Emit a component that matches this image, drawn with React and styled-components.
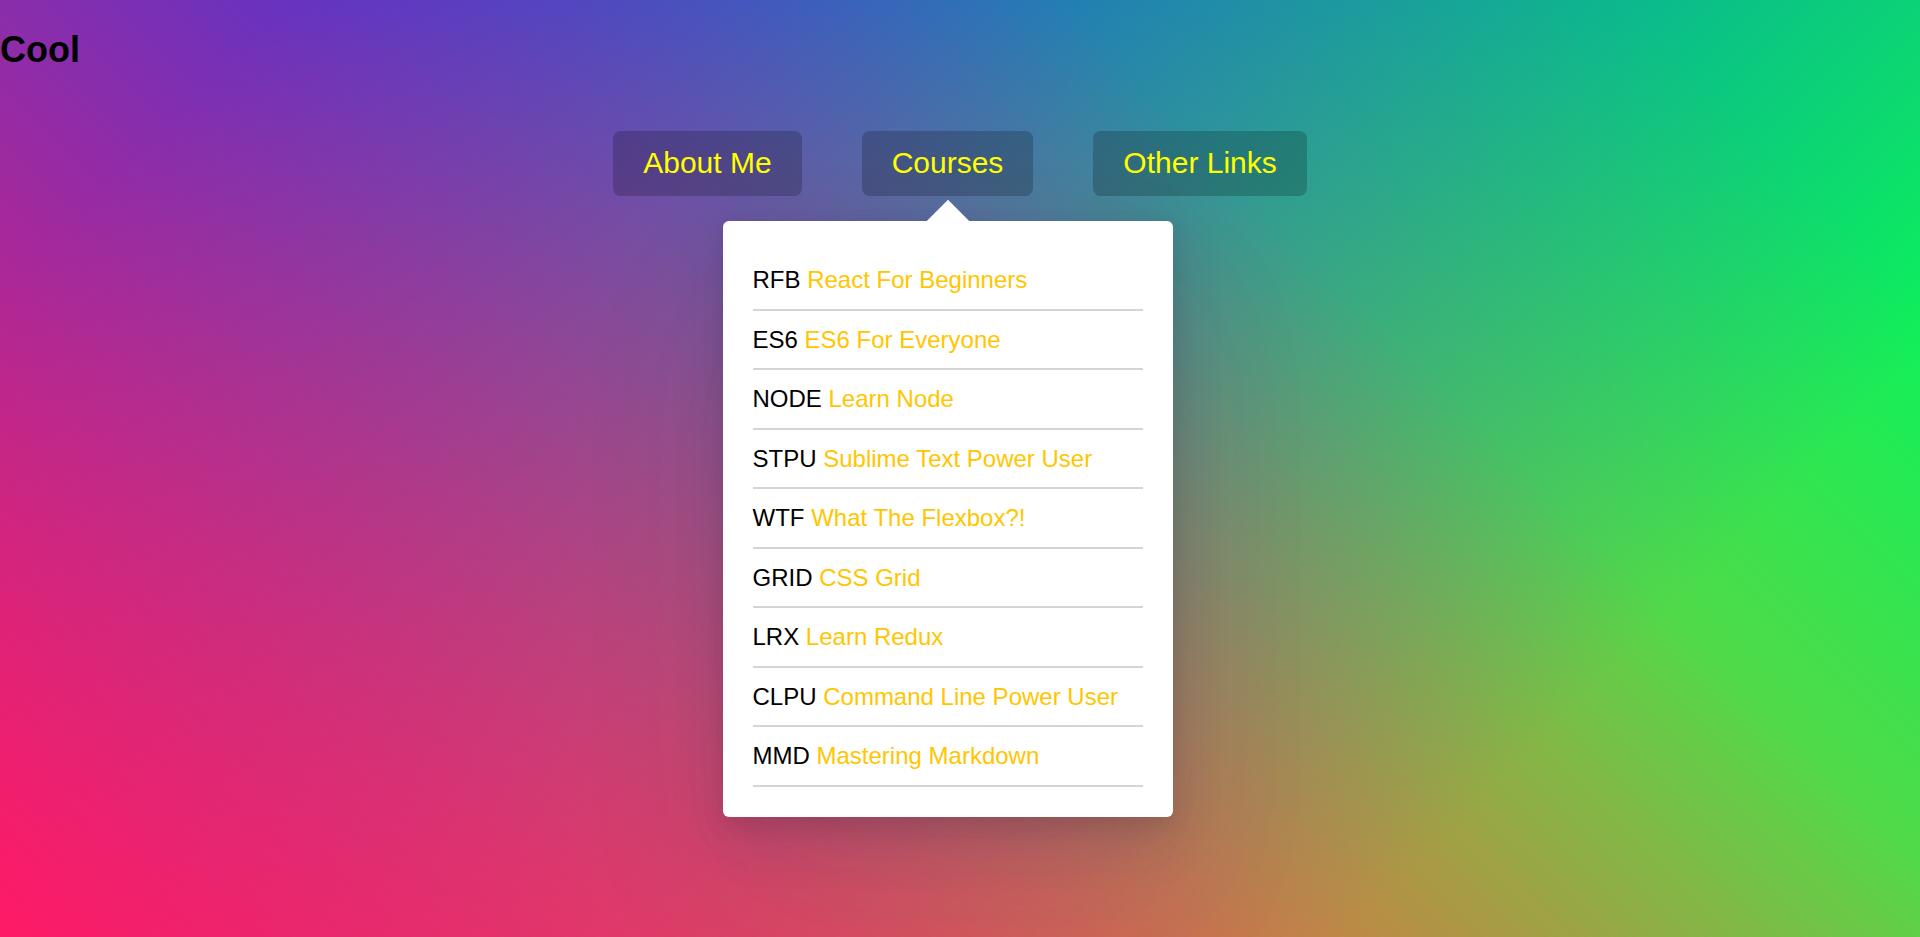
import React from "react";
import styled, { createGlobalStyle } from "styled-components";

const courses = [
  { code: "RFB", title: "React For Beginners" },
  { code: "ES6", title: "ES6 For Everyone" },
  { code: "NODE", title: "Learn Node" },
  { code: "STPU", title: "Sublime Text Power User" },
  { code: "WTF", title: "What The Flexbox?!" },
  { code: "GRID", title: "CSS Grid" },
  { code: "LRX", title: "Learn Redux" },
  { code: "CLPU", title: "Command Line Power User" },
  { code: "MMD", title: "Mastering Markdown" },
];

const links = ["About Me", "Courses", "Other Links"];

const GlobalStyle = createGlobalStyle`
  html {
    box-sizing: border-box;
    font-family: "Liberation Sans", Arial, sans-serif;
  }
  *, *:before, *:after {
    box-sizing: inherit;
  }
  body {
    margin: 0;
    min-height: 100vh;
    background:
      linear-gradient(45deg, hsla(340, 100%, 55%, 1) 0%, hsla(340, 100%, 55%, 0) 70%),
      linear-gradient(135deg, hsla(225, 95%, 50%, 1) 10%, hsla(225, 95%, 50%, 0) 80%),
      linear-gradient(225deg, hsla(140, 90%, 50%, 1) 10%, hsla(140, 90%, 50%, 0) 80%),
      linear-gradient(315deg, hsla(35, 95%, 55%, 1) 100%, hsla(35, 95%, 55%, 0) 70%);
  }
`;

const Title = styled.h2`
  margin: 0 0 31px;
  padding-top: 28.8px;
  font-size: 36px;
  font-weight: bold;
  line-height: 41.4px;
  color: #000;
`;

const Nav = styled.nav`
  position: relative;
`;

const Menu = styled.ul`
  list-style: none;
  margin: 0;
  padding: 0;
  display: flex;
  justify-content: center;
`;

const MenuItem = styled.li`
  position: relative;
  display: flex;
  justify-content: center;
`;

const Trigger = styled.a`
  display: inline-block;
  margin: 30px;
  padding: 15px 30px;
  font-size: 30px;
  line-height: 34.5px;
  color: yellow;
  text-decoration: none;
  background: rgba(0, 0, 0, 0.2);
  border-radius: 7.5px;
`;

const Dropdown = styled.div`
  position: absolute;
  top: 120px;
  left: 50%;
  transform: translateX(-50%);
  width: 450px;
  padding: 30px;
  background: #fff;
  border-radius: 6px;
  box-shadow: 0 75px 150px rgba(50, 50, 93, 0.1),
    0 22.5px 52.5px rgba(50, 50, 93, 0.15), 0 7.5px 22.5px rgba(0, 0, 0, 0.1);
  z-index: 1;
`;

const Arrow = styled.span`
  position: absolute;
  top: 0;
  left: 50%;
  width: 30px;
  height: 30px;
  background: #fff;
  transform: translate(-50%, -50%) rotate(45deg);
`;

const CourseList = styled.ul`
  list-style: none;
  margin: 0;
  padding: 0;
  position: relative;
`;

const Course = styled.li`
  display: block;
  padding: 15px 0;
  font-size: 24px;
  line-height: 27.5px;
  color: #000;
  white-space: nowrap;
  border-bottom: 2px solid rgba(0, 0, 0, 0.17);
`;

const CourseLink = styled.a`
  color: #ffc600;
  text-decoration: none;
`;

const CoursesMenu = () => (
  <Dropdown>
    <Arrow />
    <CourseList>
      {courses.map(course => (
        <Course key={course.code}>
          <span>{course.code}</span>{" "}
          <CourseLink href="#">{course.title}</CourseLink>
        </Course>
      ))}
    </CourseList>
  </Dropdown>
);

const App = () => {
  return (
    <>
      <GlobalStyle />
      <Title>Cool</Title>
      <Nav>
        <Menu>
          {links.map(label => (
            <MenuItem key={label}>
              <Trigger href="#">{label}</Trigger>
              {label === "Courses" && <CoursesMenu />}
            </MenuItem>
          ))}
        </Menu>
      </Nav>
    </>
  );
};

export default App;
